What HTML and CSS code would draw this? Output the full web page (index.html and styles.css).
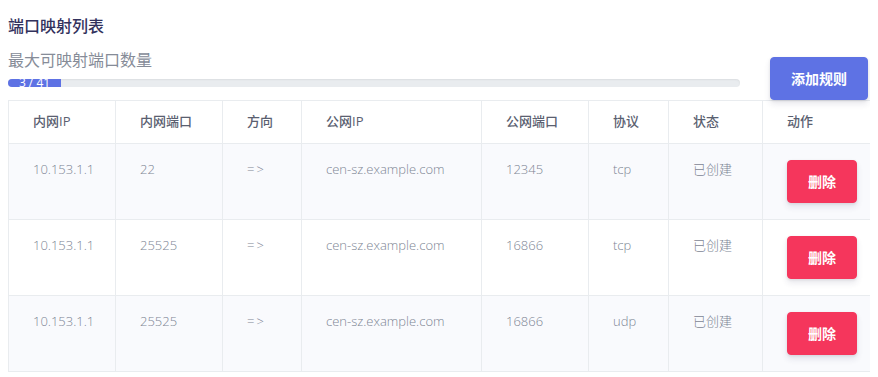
FILE: index.html
```html
<!DOCTYPE html>
<html lang="zh">
<head>
<meta charset="utf-8">
<title>端口映射列表</title>
<link rel="stylesheet" href="styles.css">
</head>
<body>
<h3 class="title">端口映射列表</h3>
<div class="toolbar">
  <div class="quota">
    <div class="quota-label">最大可映射端口数量</div>
    <div class="progress"><div class="progress-bar" style="width: 53px">3 / 41</div></div>
  </div>
  <button class="btn btn-primary">添加规则</button>
</div>
<table class="table">
  <colgroup>
    <col class="c1"><col class="c2"><col class="c3"><col class="c4"><col class="c5"><col class="c6"><col class="c7"><col class="c8">
  </colgroup>
  <thead>
    <tr><th>内网IP</th><th>内网端口</th><th>方向</th><th>公网IP</th><th>公网端口</th><th>协议</th><th>状态</th><th>动作</th></tr>
  </thead>
  <tbody>
    <tr><td>10.153.1.1</td><td>22</td><td class="dir">=&gt;</td><td>cen-sz.example.com</td><td>12345</td><td>tcp</td><td>已创建</td><td><button class="btn btn-danger">删除</button></td></tr>
    <tr><td>10.153.1.1</td><td>25525</td><td class="dir">=&gt;</td><td>cen-sz.example.com</td><td>16866</td><td>tcp</td><td>已创建</td><td><button class="btn btn-danger">删除</button></td></tr>
    <tr><td>10.153.1.1</td><td>25525</td><td class="dir">=&gt;</td><td>cen-sz.example.com</td><td>16866</td><td>udp</td><td>已创建</td><td><button class="btn btn-danger">删除</button></td></tr>
  </tbody>
</table>
</body>
</html>
```
FILE: styles.css
```css
html { overflow: hidden; }
body {
  margin: 8px;
  font-family: "Open Sans", "Noto Sans CJK SC", sans-serif;
  background: #fff;
  color: #525f7f;
}
.title {
  margin: 6px 0 0;
  font-size: 16px;
  line-height: 24px;
  font-weight: 500;
  color: #32325d;
}
.toolbar {
  display: flex;
  align-items: flex-end;
  margin-top: 10px;
  margin-right: 2px;
}
.quota {
  flex: 1;
  padding-bottom: 13px;
  margin-right: 30px;
}
.quota-label {
  font-size: 16px;
  line-height: 24px;
  color: #868c98;
}
.progress {
  margin-top: 7px;
  height: 8px;
  border-radius: 4px;
  background: #e9ecef;
  overflow: hidden;
  box-shadow: inset 0 1px 2px rgba(0,0,0,.06);
}
.progress-bar {
  height: 8px;
  background: #5e72e4;
  color: #fff;
  font-size: 12px;
  line-height: 8px;
  text-align: center;
  white-space: nowrap;
  overflow: hidden;
}
.btn {
  font-family: "Open Sans", "Noto Sans CJK SC", sans-serif;
  font-size: 14px;
  font-weight: 600;
  line-height: 21px;
  padding: 10px 20px;
  border: 1px solid transparent;
  border-radius: 4px;
  color: #fff;
  box-shadow: 0 4px 6px rgba(50,50,93,.11), 0 1px 3px rgba(0,0,0,.08);
}
.btn-primary { background: #5e72e4; border-color: #5e72e4; }
.btn-danger { background: #f5365c; border-color: #f5365c; }
.table {
  border-collapse: collapse;
  table-layout: fixed;
  width: 873px;
  min-width: 873px;
}
.c1 { width: 107px; }
.c2 { width: 107px; }
.c3 { width: 79px; }
.c4 { width: 180px; }
.c5 { width: 107px; }
.c6 { width: 80px; }
.c7 { width: 94px; }
.c8 { width: 119px; }
.table th, .table td {
  border: 1px solid #e9ecef;
  text-align: left;
  vertical-align: top;
  font-size: 13px;
  line-height: 19.5px;
  padding: 11px 24px;
}
.table th {
  font-weight: 500;
  color: #5a6070;
}
.table td {
  padding: 16px 24px;
  font-weight: 300;
  color: #7d8594;
  white-space: nowrap;
}
.table td.dir { letter-spacing: 2px; }
.table tbody tr:nth-child(odd) { background: #f9fafd; }
```
